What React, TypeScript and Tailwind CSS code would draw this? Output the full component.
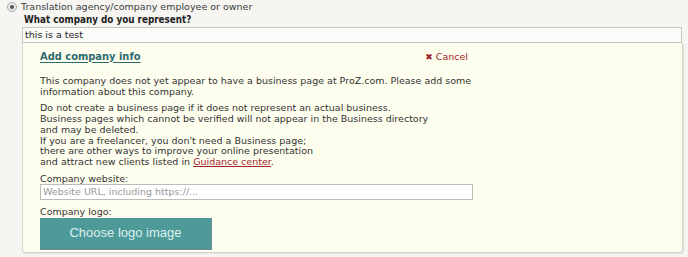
import React from 'react';

const font = { fontFamily: '"DejaVu Sans", Verdana, sans-serif' };
const boldFont = { fontFamily: '"DejaVu Sans Condensed", "DejaVu Sans", Verdana, sans-serif' };

export default function App() {
  return (
    <div
      className="w-[688px] h-[257px] overflow-hidden bg-[#f6f5f1] text-[#333] text-[9.5px] leading-[10.7px]"
      style={font}
    >
      <div className="flex items-center h-[13px] pt-[1px] pl-[7px] gap-[4px]">
        <span className="w-[10px] h-[10px] rounded-full border border-[#aaa] bg-[#e8e8e8] flex items-center justify-center">
          <span className="w-[4px] h-[4px] rounded-full bg-[#555]" />
        </span>
        <span className="text-[#3a3a3a]">Translation agency/company employee or owner</span>
      </div>
      <div className="pl-[24px] pt-[2px] h-[14px] font-bold text-[9.8px] text-[#222]" style={boldFont}>
        What company do you represent?
      </div>
      <div className="ml-[22px] w-[660px] h-[16px] border border-[#c9c8c0] bg-[#fbfbf9] flex items-center pl-[2px] text-[#222]">
        this is a test
      </div>
      <div className="ml-[22px] w-[661px] h-[210px] bg-[#fefeef] border-x border-b border-[#d6d6cc] rounded-b-[3px] shadow-[1px_1px_1px_rgba(0,0,0,0.08)] pl-[17px] pt-[6px]">
        <div className="flex items-center h-[16px] w-[428px] justify-between">
          <span
            className="font-bold text-[11px] text-[#2c6a6e] underline underline-offset-[2px]"
            style={boldFont}
          >
            Add company info
          </span>
          <span className="flex items-center gap-[3px] text-[#a3252c]">
            <span className="font-bold text-[9px]">✖</span>
            <span>Cancel</span>
          </span>
        </div>
        <p className="mt-[11px]">
          This company does not yet appear to have a business page at ProZ.com. Please add some
          <br />
          information about this company.
        </p>
        <p className="mt-[6px]">
          Do not create a business page if it does not represent an actual business.
          <br />
          Business pages which cannot be verified will not appear in the Business directory
          <br />
          and may be deleted.
          <br />
          If you are a freelancer, you don't need a Business page;
          <br />
          there are other ways to improve your online presentation
          <br />
          and attract new clients listed in{' '}
          <span className="text-[#a3252c] underline">Guidance center</span>.
        </p>
        <div className="mt-[6px]">Company website:</div>
        <div className="w-[433px] h-[16px] border border-[#bdbdb6] bg-white flex items-center pl-[2px] text-[#999]">
          Website URL, including https://...
        </div>
        <div className="mt-[7px]">Company logo:</div>
        <div
          className="w-[172px] h-[32px] bg-[#4e9a98] border-b border-r border-[#6f8a8c] flex items-center justify-center text-[#daf1ee] text-[13px]"
          style={{ fontFamily: '"Liberation Sans", Arial, sans-serif' }}
        >
          Choose logo image
        </div>
      </div>
    </div>
  );
}
